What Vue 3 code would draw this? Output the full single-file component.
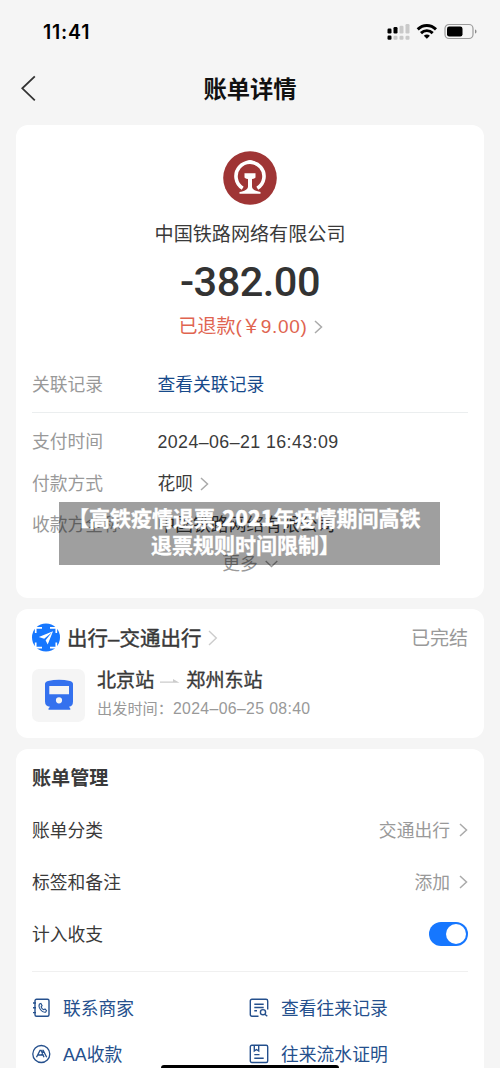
<script setup>
const details = [
  { label: '支付时间', value: '2024–06–21 16:43:09', date: true },
  { label: '付款方式', value: '花呗', arrow: true },
  { label: '收款方全称', value: '中国铁路网络有限公司' },
]
const settings = [
  { label: '账单分类', value: '交通出行' },
  { label: '标签和备注', value: '添加' },
]
</script>

<template>
  <div class="screen">
    <header class="status">
      <span class="clock">11:41</span>
      <svg class="status-icons" width="92" height="20" viewBox="0 0 92 20">
        <g fill="#000">
          <rect x="0.5" y="6.5" width="4" height="5" rx="1.2" />
          <rect x="6.5" y="5" width="4" height="6.5" rx="1.2" />
          <rect x="0.5" y="13.5" width="4" height="4.2" rx="1.2" />
        </g>
        <g fill="#c9c9c9">
          <rect x="12.5" y="3.8" width="4" height="7.7" rx="1.2" />
          <rect x="18.5" y="2" width="4" height="9.5" rx="1.2" />
          <rect x="6.5" y="13.7" width="4" height="4" rx="1.2" />
          <rect x="12.5" y="13.7" width="4" height="4" rx="1.2" />
          <rect x="18.5" y="13.7" width="4" height="4" rx="1.2" />
        </g>
        <g fill="none" stroke="#000" stroke-width="2.9">
          <path d="M30.7 7.4C36 2.2 43.600 2.200 49 7.400" />
          <path d="M34 11.100C37.400 7.800 42.300 7.800 45.700 11.100" />
        </g>
        <path d="M39.850 16.800L36.800 13.700C38.500 12 41.200 12 42.900 13.700Z" fill="#000" />
        <rect x="58" y="2.500" width="28" height="14" rx="4" fill="none" stroke="#9b9b9b" stroke-width="1.200" />
        <rect x="60" y="4.500" width="15.500" height="10" rx="2.200" fill="#000" />
        <path d="M88 7.500C90 8 90 11 88 11.500Z" fill="#8c8c8c" />
      </svg>
    </header>
    <nav class="nav">
      <svg class="back" width="18" height="28" viewBox="0 0 18 28"><path d="M14.800 2.300L2.300 14.300L14.800 26.300" fill="none" stroke="#333" stroke-width="1.800" /></svg>
      <h1>账单详情</h1>
    </nav>

    <main>
      <section class="card bill">
        <svg class="railway" width="54" height="54" viewBox="0 0 54 54">
          <circle cx="27" cy="27" r="26.800" fill="#9f3535" />
          <path d="M19.700 37.200A14 14 0 1 1 34.300 37.200" fill="none" stroke="#fff" stroke-width="3.600" />
          <path d="M23.500 10.800Q24 9 27 9Q30 9 30.500 10.800Z" fill="#fff" />
          <path d="M21.500 22.200H32.500V26.300Q32.500 27.500 29 28V35.500C29 38.500 32.500 40.300 37.500 41V42.800H16.500V41C21.500 40.300 25 38.500 25 35.500V28Q21.500 27.500 21.500 26.300Z" fill="#fff" />
        </svg>
        <div class="company">中国铁路网络有限公司</div>
        <div class="amount">-382.00</div>
        <div class="refund">
          <span>已退款<i>(</i><i>￥</i><i class="sum">9.00)</i></span>
          <svg width="9" height="14" viewBox="0 0 9 14"><path d="M1 1L7.500 7L1 13" fill="none" stroke="#aaa" stroke-width="1.500" /></svg>
        </div>
        <div class="row related"><span class="label">关联记录</span><span class="link">查看关联记录</span></div>
        <hr />
        <div class="details">
          <div v-for="item in details" :key="item.label" class="row">
            <span class="label">{{ item.label }}</span>
            <span :class="{ date: item.date }">{{ item.value }}</span>
            <svg v-if="item.arrow" class="row-arrow" width="9" height="14" viewBox="0 0 9 14"><path d="M1 1L7.500 7L1 13" fill="none" stroke="#aaa" stroke-width="1.500" /></svg>
          </div>
        </div>
        <div class="more">更多<svg width="13" height="8" viewBox="0 0 13 8"><path d="M.7 1L6.500 6.500L12.300 1" fill="none" stroke="#999" stroke-width="1.400" /></svg></div>
        <div class="caption"><p class="first">【高铁疫情退票<b>,2021</b>年疫情期间高铁</p><p class="second">退票规则时间限制】</p></div>
      </section>

      <section class="card trip">
        <div class="trip-head">
          <svg width="28" height="30" viewBox="0 0 28 30">
            <circle cx="14" cy="14.500" r="14" fill="#1677ff" />
            <path d="M3.700 10V4.800H10M18 4.800H24.300V10M24.300 19.500V24.700H18M10 24.700H3.700V19.500" fill="none" stroke="#fff" stroke-width="1.700" />
            <path d="M21 8.200L6.800 14L12.200 15.700L20 9.200L13.600 17.200L15.700 21.500Z" fill="#fff" />
          </svg>
          <span class="trip-title">出行<i>–</i>交通出行</span>
          <svg class="trip-arrow" width="10" height="16" viewBox="0 0 10 16"><path d="M1 1L8.300 8L1 15" fill="none" stroke="#ccc" stroke-width="1.400" /></svg>
          <span class="done">已完结</span>
        </div>
        <div class="trip-body">
          <div class="train">
            <svg width="28" height="32" viewBox="0 0 28 32">
              <path fill="#3471ee" fill-rule="evenodd" d="M0 5Q0 2.600 3 1.900Q14 -.5 25 1.900Q28 2.600 28 5V22.500Q28 27.200 24 27.800L25.300 29.600V30.800H3.500V29.600L5 27.800Q0 27.200 0 22.500ZM4.300 7V15.300H24V7ZM14 18.200A3.100 3.100 0 1 0 14 24.400A3.100 3.100 0 1 0 14 18.200Z" />
            </svg>
          </div>
          <div class="trip-text">
            <div class="stations"><span>北京站</span><svg width="20" height="6" viewBox="0 0 20 6"><path d="M0 4.800H19.500L13 1V3.500H0Z" fill="#ccc" /></svg><span>郑州东站</span></div>
            <div class="departure"><span>出发时间：</span><span class="depart-date">2024–06–25 08:40</span></div>
          </div>
        </div>
      </section>

      <section class="card manage">
        <h2>账单管理</h2>
        <div v-for="item in settings" :key="item.label" class="setting">
          <span class="text">{{ item.label }}</span>
          <span class="setting-value"><span class="text">{{ item.value }}</span><svg width="9" height="14" viewBox="0 0 9 14"><path d="M1 1L7.500 7L1 13" fill="none" stroke="#aaa" stroke-width="1.500" /></svg></span>
        </div>
        <div class="setting"><span class="text">计入收支</span><span class="switch"><span class="knob"></span></span></div>
        <hr />
        <div class="links">
          <a><svg width="20" height="20" viewBox="0 0 20 20"><g fill="none" stroke="#25508d" stroke-width="1.400"><rect x="3" y="1.200" width="14" height="17" rx="1.500" /><path d="M1 5H4M1 9.800H4M1 14.600H4" /><path d="M7.400 6.100L8.900 5.500L10.100 7.700L9.100 8.900Q9.800 11 11.700 11.700L13 11L14.500 12.600L13.600 14.200C10 15 5.800 9.500 7.400 6.100Z" stroke-width="1.100" /></g></svg><span class="text">联系商家</span></a>
          <a><svg width="20" height="20" viewBox="0 0 20 20"><g fill="none" stroke="#25508d" stroke-width="1.400"><path d="M9.500 18.300H3Q1.300 18.300 1.300 16.500V3Q1.300 1.300 3 1.300H17Q18.700 1.300 18.700 3V11.500M5.300 6.200H14.700M5.300 9.500H14.700M5.300 12.800H8" /><circle cx="14" cy="14.200" r="2.600" /><path d="M15.800 16.200L18.300 18.300" /></g></svg><span class="text">查看往来记录</span></a>
          <a><svg width="20" height="20" viewBox="0 0 20 20"><g fill="none" stroke="#25508d" stroke-width="1.300"><circle cx="9.300" cy="10" r="8.500" /><path d="M4.500 13.300L8 6.500H9.200L12 13.300M6.200 11H10.500M10.300 6.500H11.200L14.700 13.300M9.500 11L11 7.500" /></g></svg><span class="text">AA收款</span></a>
          <a><svg width="20" height="20" viewBox="0 0 20 20"><g fill="none" stroke="#25508d" stroke-width="1.400"><rect x="1.300" y="1.300" width="17.400" height="17.200" rx="1.500" /><path d="M5.300 1.300V7L7.500 5.500L9.700 7V1.300M5.300 10.600H10.500M5.300 14.200H14.700" /></g></svg><span class="text">往来流水证明</span></a>
        </div>
      </section>
    </main>
    <div class="home"></div>
  </div>
</template>

<style>
html, body { margin: 0; background: #f5f5f5; overflow: hidden; }
</style>

<style scoped>
* { box-sizing: border-box; }
.screen {
  position: relative;
  width: 500px;
  height: 1068px;
  overflow: hidden;
  background: #f5f5f5;
  color: #3a3a3a;
  font: 17.8px/24px "Liberation Sans", "Noto Sans CJK SC", sans-serif;
}
svg { display: block; flex: none; }
i { font-style: normal; }
.status { display: flex; height: 63px; align-items: center; justify-content: space-between; padding: 0 21px 0 43px; }
.clock { font: 600 19.5px/24px Inter, sans-serif; letter-spacing: .8px; color: #000; }
.status-icons { margin-top: 1px; }
.nav { display: grid; grid-template-columns: 60px 1fr 60px; height: 62px; align-items: start; padding-top: 10px; }
.back { margin: 1px 0 0 20px; }
h1 { margin: 1px 0 0; color: #111; font-size: 23.3px; line-height: 32px; font-weight: 700; text-align: center; }
main { display: flex; flex-direction: column; gap: 11px; padding: 0 16px; }
.card { width: 468px; border-radius: 12px; background: #fff; padding: 0 16px; }
.bill { position: relative; height: 473px; padding-top: 26px; }
.railway { margin: 0 auto; }
.company { margin-top: 18px; text-align: center; font-size: 19.1px; }
.amount { margin-top: 15px; height: 40px; text-align: center; font: 500 41.5px/40px Roboto, sans-serif; letter-spacing: -.5px; color: #333; }
.refund { display: flex; justify-content: center; align-items: center; gap: 6px; margin-top: 13px; color: #e06450; font-size: 19px; padding-left: 1px; }
.sum { letter-spacing: .7px; }
.row { display: flex; align-items: center; height: 24px; }
.label { width: 125.500px; color: #999; }
.related { margin-top: 34px; }
.link { color: #174a8b; }
hr { height: 1px; margin: 15px 0 0; border: 0; background: #ebeeef; }
.details { display: flex; flex-direction: column; gap: 17.500px; margin-top: 17px; }
.date { letter-spacing: .42px; }
.row-arrow { margin-left: 7px; }
.more { display: flex; justify-content: center; align-items: center; gap: 7px; margin-top: 15px; color: #999; }
.caption { position: absolute; left: 43px; top: 377px; width: 381px; height: 63px; padding: 2px 0 0; background: rgba(0, 0, 0, .375); color: #fff; font-size: 21px; line-height: 27px; font-weight: 700; white-space: nowrap; -webkit-text-stroke: .3px #fff; }
.caption p { margin: 0; }
.first { padding-left: 9px; }
.second { padding-left: 92px; }
.caption b { font-family: "Noto Sans CJK SC", sans-serif; }
.trip { height: 129px; padding-top: 14px; margin-top: -.5px; }
.trip-head { display: flex; align-items: center; height: 30px; }
.trip-title { margin-left: 7px; padding-top: 2px; font-size: 20.5px; -webkit-text-stroke: .4px #333; }
.trip-arrow { margin-left: 7px; }
.done { margin-left: auto; padding-top: 2px; color: #999; font-size: 19px; }
.trip-body { display: flex; margin-top: 16px; }
.train { display: grid; place-items: center; width: 53px; height: 53px; border-radius: 7px; background: #f5f5f5; }
.trip-text { margin-left: 12px; }
.stations { display: flex; align-items: center; gap: 6px; font-size: 19.1px; -webkit-text-stroke: .35px #333; }
.stations svg { -webkit-text-stroke: 0; }
.departure { display: flex; margin-top: 4px; color: #999; font-size: 15.2px; }
.depart-date { font-size: 15.8px; letter-spacing: .36px; }
.manage { height: 340px; padding-top: 18px; }
h2 { margin: 0 0 13px; font-size: 19.1px; line-height: 24px; font-weight: 700; }
.setting { display: flex; align-items: center; justify-content: space-between; height: 52px; }
.text { padding-top: 2px; }
.setting-value { display: flex; align-items: center; gap: 9px; color: #999; }
.switch { width: 39px; height: 24px; padding: 2px; border-radius: 12px; background: #1677ff; }
.knob { display: block; width: 20px; height: 20px; margin-left: 15px; border-radius: 50%; background: #fff; }
.manage hr { margin-top: 11px; height: 1.500px; background: #f0f0f0; }
.links { display: grid; grid-template-columns: 217px 1fr; row-gap: 20px; margin-top: 23px; }
.links a { display: flex; align-items: center; gap: 12px; color: #25508d; }
.links a:nth-child(odd) { gap: 11px; }
.home { position: absolute; left: 161px; bottom: 0; width: 178px; height: 3px; border-radius: 3px 3px 0 0; background: #000; }
</style>
